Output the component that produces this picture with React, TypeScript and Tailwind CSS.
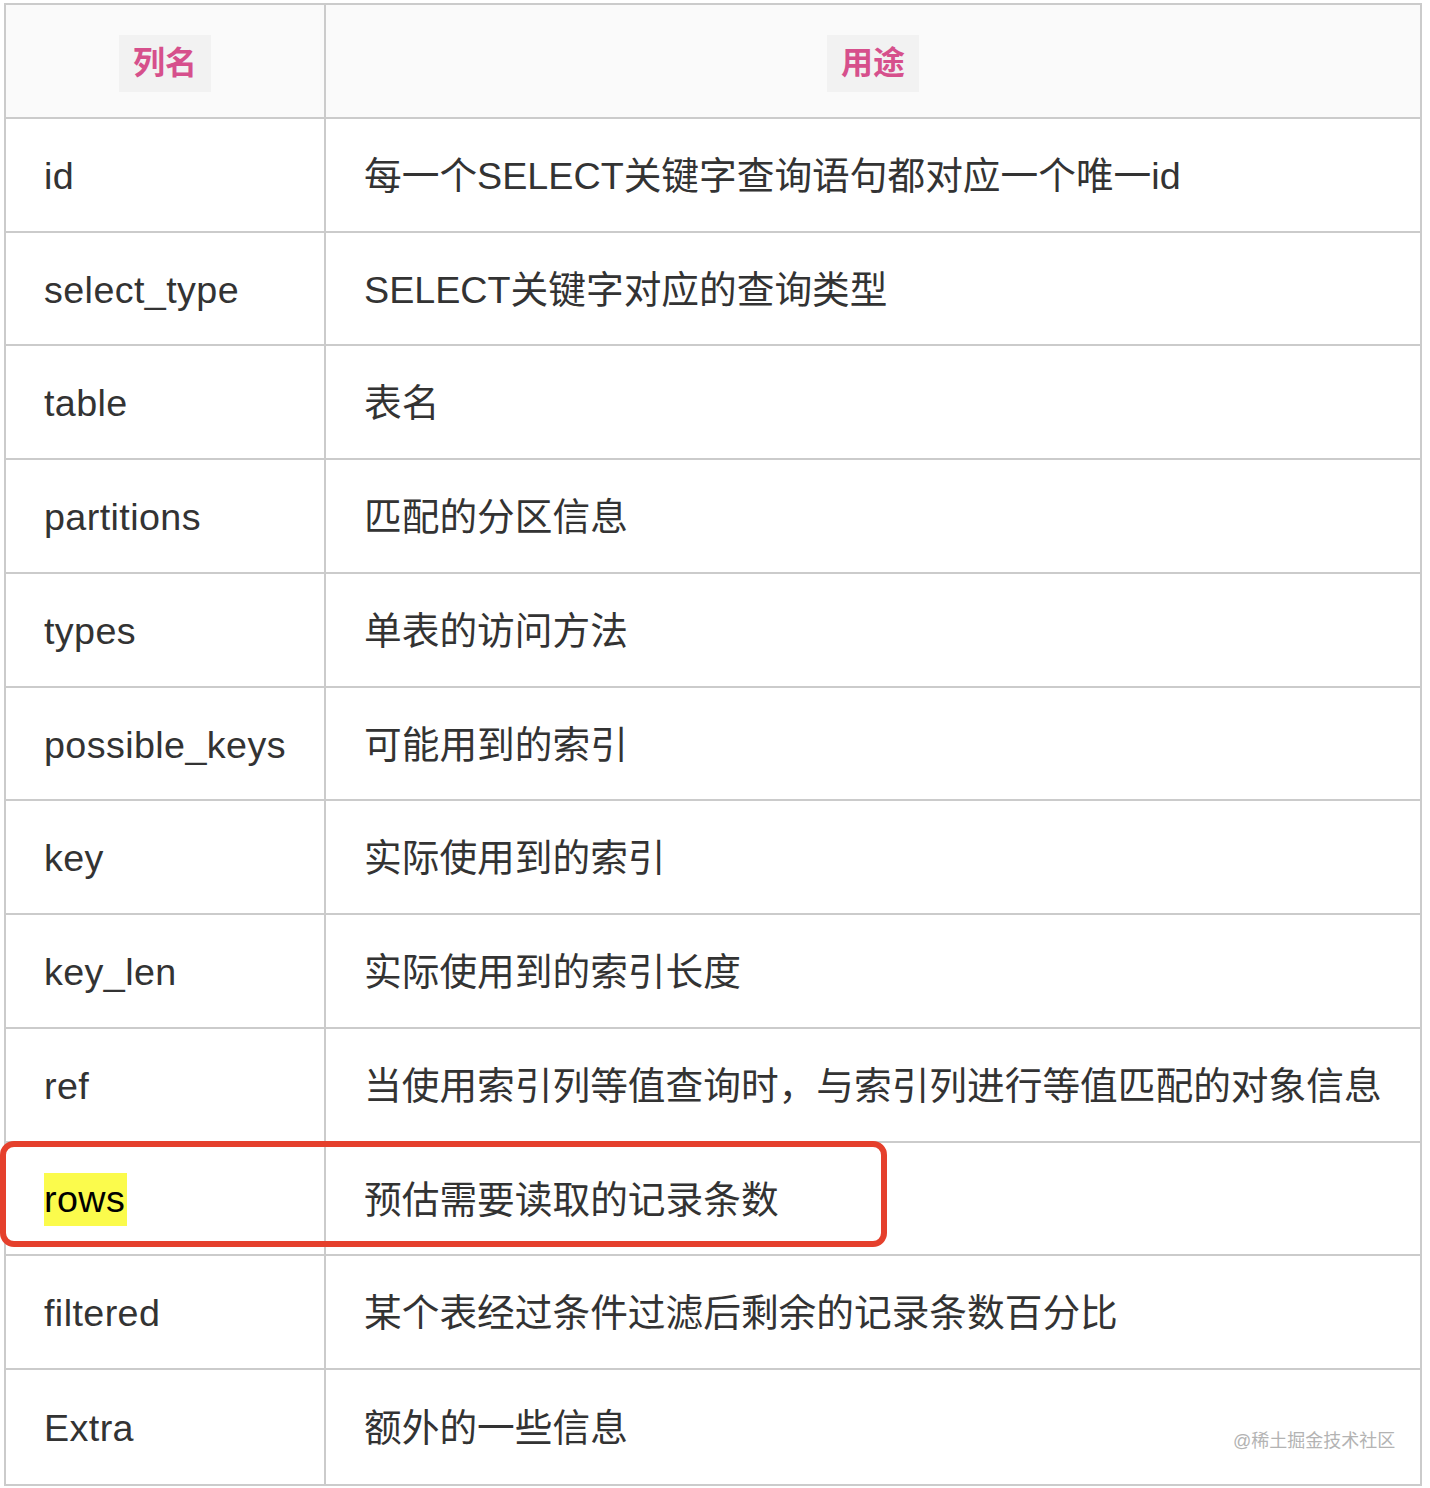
import React from 'react';

interface Row {
  name: string;
  desc: string;
}

const ROWS: Row[] = [
  { name: 'id', desc: '每一个SELECT关键字查询语句都对应一个唯一id' },
  { name: 'select_type', desc: 'SELECT关键字对应的查询类型' },
  { name: 'table', desc: '表名' },
  { name: 'partitions', desc: '匹配的分区信息' },
  { name: 'types', desc: '单表的访问方法' },
  { name: 'possible_keys', desc: '可能用到的索引' },
  { name: 'key', desc: '实际使用到的索引' },
  { name: 'key_len', desc: '实际使用到的索引长度' },
  { name: 'ref', desc: '当使用索引列等值查询时，与索引列进行等值匹配的对象信息' },
  { name: 'rows', desc: '预估需要读取的记录条数' },
  { name: 'filtered', desc: '某个表经过条件过滤后剩余的记录条数百分比' },
  { name: 'Extra', desc: '额外的一些信息' },
];

const FONT = { fontFamily: '"Liberation Sans", "Noto Sans CJK SC", sans-serif' };

export default function App() {
  return (
    <div className="relative w-[1430px] h-[1488px] bg-white pt-[3px] pl-[4px]" style={FONT}>
      <div className="w-[1418px] border-2 border-[#cbcbcb]">
        {/* header */}
        <div className="flex h-[113.75px] border-b-2 border-[#cbcbcb] bg-[#fafafa]">
          <div className="w-[320px] shrink-0 border-r-2 border-[#cbcbcb] flex items-center justify-center">
            <span className="bg-[#f2f2f2] px-[14px] py-[8px] leading-[41px] text-[32px] font-bold text-[#d6508c] mt-[6px]">
              列名
            </span>
          </div>
          <div className="flex-1 flex items-center justify-center">
            <span className="bg-[#f2f2f2] px-[14px] py-[8px] leading-[41px] text-[32px] font-bold text-[#d6508c] mt-[6px]">
              用途
            </span>
          </div>
        </div>

        {ROWS.map((row, i) => (
          <div
            key={row.name}
            className={`flex h-[113.75px] text-[37.7px] text-[#333333] ${
              i < ROWS.length - 1 ? 'border-b-2 border-[#cbcbcb]' : ''
            }`}
          >
            <div className="w-[320px] shrink-0 border-r-2 border-[#cbcbcb] flex items-center pl-[38px] pt-[3px] tracking-[0.4px]">
              {row.name === 'rows' ? (
                <span className="bg-[#fbfb4c] text-black leading-[53px] pr-[2px]">{row.name}</span>
              ) : (
                <span>{row.name}</span>
              )}
            </div>
            <div className="flex-1 flex items-center pl-[38px] pt-[3px] whitespace-nowrap">{row.desc}</div>
          </div>
        ))}
      </div>

      {/* red highlight frame around the rows row */}
      <div className="absolute left-0 top-[1141px] w-[887px] h-[106px] border-[6px] border-[#e5402c] rounded-[14px]" />

      <div className="absolute left-[1233px] top-[1428px] text-[18px] text-[#b3b3b3]">@稀土掘金技术社区</div>
    </div>
  );
}
